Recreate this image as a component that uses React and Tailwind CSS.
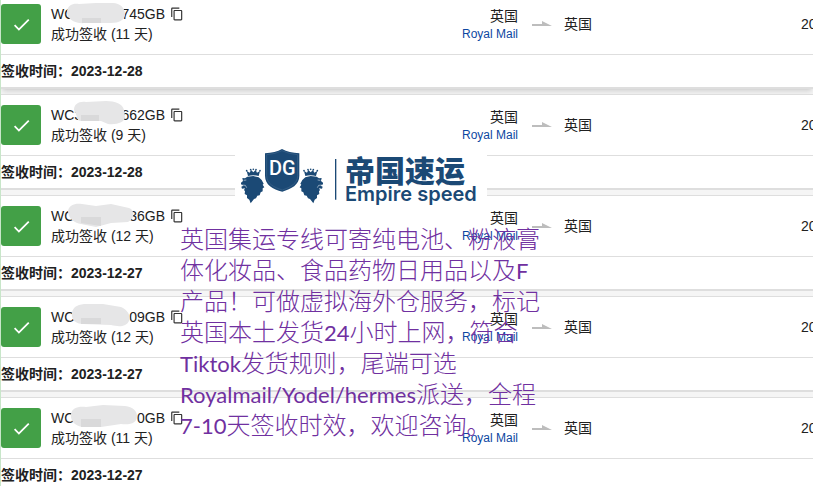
import { MdCheck, MdContentCopy } from 'react-icons/md';

const parcels = [
  {
    id: 1, prefix: 'WC', suffix: '745GB', days: 11, date: '2023-12-28',
    blob: 'M16 11C17 5 22 3 28 4L45 3L62 3C69 3 74 8 74 14C74 20 68 23 60 23L34 23C24 24 15 19 16 11Z',
    shade: 'M31 18h19v5h-19Z',
  },
  {
    id: 2, prefix: 'WC3', suffix: '662GB', days: 9, date: '2023-12-28',
    blob: 'M23 9C23 3 28 0 35 1L55 0C64 0 72 3 73 9L74 16C74 21 66 24 57 23L50 20L30 20C25 20 27 15 23 9Z',
    shade: 'M30 14h18v6h-18Z',
  },
  {
    id: 3, prefix: 'WC', suffix: '36GB', days: 12, date: '2023-12-27',
    blob: 'M17 9C18 3 24 1 31 2L45 4L60 2L78 6C84 8 84 17 77 20L60 21L45 25L30 22C24 21 17 17 17 9Z',
    shade: 'M30 15h20v9l-20 -3Z',
  },
  {
    id: 4, prefix: 'WC', suffix: '09GB', days: 12, date: '2023-12-27',
    blob: 'M21 10C22 3 28 1 36 1L52 1L70 4C77 7 80 13 78 18C75 24 68 24 60 22L32 21C25 21 20 17 21 10Z',
    shade: 'M30 15h20v6h-20Z',
  },
  {
    id: 5, prefix: 'WC', suffix: '0GB', days: 11, date: '2023-12-27',
    blob: 'M20 10C21 4 27 2 35 3L52 1L74 2C82 3 86 7 86 12C86 19 80 21 70 20L50 23L32 23C24 22 19 17 20 10Z',
    shade: 'M30 15h20v8h-20Z',
  },
];

function Arrow() {
  return (
    <svg viewBox="0 0 20 6" className="mr-3 ml-3.5 h-1.5 w-5 shrink-0 fill-[#bdbdbd]" aria-hidden="true">
      <path d="M0 3H10V0L20 5H0Z" />
    </svg>
  );
}

function ParcelCard({ parcel }) {
  return (
    <article className="mb-[5px] border-t border-b-2 border-[#dedede] bg-white first:shadow-md">
      <div className="flex items-center border-b border-[#dedede] py-2.5">
        <span className="flex h-10 w-10 shrink-0 items-center justify-center rounded-[3px] bg-[#43a047] text-white">
          <MdCheck size={21} />
        </span>

        <div className="ml-2.5 flex-1 leading-5">
          <div className="relative flex items-center">
            <span className="flex w-[114px] justify-between">
              <span>{parcel.prefix}</span>
              <span>{parcel.suffix}</span>
            </span>
            {/* Hides the middle of the tracking number */}
            <svg viewBox="0 0 90 30" className="absolute -top-1 left-0 h-[30px] w-[90px]" aria-hidden="true">
              <path d={parcel.blob} fill="#e6e6e7" />
              <path d={parcel.shade} fill="#d9d9da" />
            </svg>
            <button type="button" aria-label="复制单号" className="ml-[5px] text-[#333]">
              <MdContentCopy size={14} />
            </button>
          </div>
          <p>成功签收 ({parcel.days} 天)</p>
        </div>

        <div className="w-24 shrink-0 text-right leading-5">
          <p>英国</p>
          <a href="#royal-mail" className="block text-xs leading-4 text-[#0d47a1]">Royal Mail</a>
        </div>
        <Arrow />
        <p className="w-[237px] shrink-0">英国</p>
        <p className="w-3 shrink-0 overflow-hidden whitespace-nowrap">20</p>
      </div>
      <p className="h-8 font-bold leading-8">签收时间：{parcel.date}</p>
    </article>
  );
}

function Lion() {
  return (
    <>
      <path d="M48 108L44 93L53 98L57 90L64 97L71 90L75 98L84 93L80 108Q64 104 48 108Z" />
      <circle cx="44" cy="92" r="2.5" />
      <circle cx="56" cy="89" r="2.5" />
      <circle cx="64" cy="88" r="2.5" />
      <circle cx="72" cy="89" r="2.5" />
      <circle cx="84" cy="92" r="2.5" />
      <path d="M31 114L39 115L46 110L64 108L80 112L89 120L95 131L92 134L97 142L92 145L92 154L86 157L83 166L76 167L72 175L66 177L56 190L52 179L45 174L45 166L38 162L39 154L36 150L39 145L30 146L28 140L34 137L27 133L27 128L33 123Z" />
      <path d="M35 121L43 120M29 135L40 136L44 143" fill="none" stroke="#fff" strokeWidth="1.5" />
    </>
  );
}

function Logo() {
  return (
    <div className="absolute top-[148px] left-[234px] flex h-[65px] w-[252px] items-center bg-white text-[#1b4975]">
      <svg viewBox="9 24 312 195" className="h-[65px] w-[104px] shrink-0 fill-current" aria-hidden="true">
        <path d="M99 40Q130 38 150 27Q171 38 202 40V107C202 135 178 146 151 155C122 147 99 135 99 107Z" />
        <path d="M104 44Q131 42 150 32Q170 42 197 44V106C197 131 176 141 151 150C125 142 104 131 104 106Z" fill="none" stroke="#5f81a1" strokeWidth="1" />
        <text x="151" y="104" textAnchor="middle" fill="#fff" className="font-[Roboto,sans-serif] text-[60px] font-medium">DG</text>
        <Lion />
        <g transform="translate(300 0) scale(-1 1)">
          <Lion />
        </g>
        <path d="M309 57h4v122h-4Z" />
      </svg>
      <div className="ml-1.5 whitespace-nowrap">
        <p className="font-['Noto_Sans_CJK_SC',sans-serif] text-[30px] leading-[26px] font-black">帝国速运</p>
        <p className="font-[Inter,sans-serif] text-xl leading-6 font-semibold">Empire speed</p>
      </div>
    </div>
  );
}

function Notice() {
  return (
    <div className="absolute top-[223px] left-[179px] font-[Lato,'Noto_Sans_CJK_SC',sans-serif] text-2xl leading-[31px] font-light whitespace-nowrap text-[#7030a0]">
      <p>英国集运专线可寄纯电池、粉液膏</p>
      <p>体化妆品、食品药物日用品以及<Latin>F</Latin></p>
      <p>产品！可做虚拟海外仓服务，标记</p>
      <p>英国本土发货<Latin>24</Latin>小时上网，符合</p>
      <p><Latin>Tiktok</Latin>发货规则，尾端可选</p>
      <p><Latin>Royalmail/Yodel/hermes</Latin>派送，全程</p>
      <p><Latin>7-10</Latin>天签收时效，欢迎咨询。</p>
    </div>
  );
}

function Latin({ children }) {
  return <span className="text-[22px] leading-none font-normal">{children}</span>;
}

export default function App() {
  return (
    <main className="relative h-screen overflow-hidden border-l border-[#c8e6c9] bg-[#f5f5f5] font-['Liberation_Sans','Noto_Sans_CJK_SC',sans-serif] text-sm text-[#212121]">
      <div className="-mt-[7px]">
        {parcels.map((parcel) => (
          <ParcelCard key={parcel.id} parcel={parcel} />
        ))}
      </div>
      <Logo />
      <Notice />
    </main>
  );
}
